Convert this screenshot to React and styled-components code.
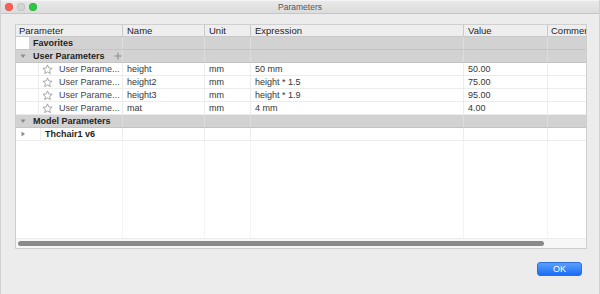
import React from 'react'
import styled, { createGlobalStyle } from 'styled-components'

const GlobalStyle = createGlobalStyle`
  html, body {
    margin: 0;
    padding: 0;
    background: #ececec;
  }
  body {
    font-family: "Liberation Sans", Arial, sans-serif;
  }
`

const COLS = '107px 82px 46px 213px 84px 38px'

const Window = styled.div`
  width: 600px;
  height: 294px;
  box-sizing: border-box;
  display: flex;
  flex-direction: column;
  background: #ececec;
  border-left: 1px solid #d0d0d0;
  border-right: 1px solid #d0d0d0;
  overflow: hidden;
`

const TitleBar = styled.div`
  height: 14px;
  flex-shrink: 0;
  position: relative;
  display: flex;
  align-items: center;
  justify-content: center;
  background: linear-gradient(#e8e8e8, #dcdcdc);
  border-top: 1px solid #f4f4f4;
  border-bottom: 1px solid #c6c6c6;
  box-sizing: border-box;
`

const Title = styled.span`
  font-size: 8.5px;
  color: #555;
`

const Lights = styled.div`
  position: absolute;
  left: 4px;
  top: 2px;
  display: flex;
  gap: 4px;
`

const Light = styled.span`
  width: 8px;
  height: 8px;
  border-radius: 50%;
  background: ${({ color }) => color};
  box-shadow: inset 0 0 0 0.5px rgba(0, 0, 0, 0.15);
`

const Body = styled.div`
  flex: 1;
  display: flex;
  flex-direction: column;
  padding: 10px 12px 0 14px;
`

const Panel = styled.div`
  width: 572px;
  height: 225px;
  box-sizing: border-box;
  border: 1px solid #cfcfcf;
  background: #fff;
  display: flex;
  flex-direction: column;
`

const Row = styled.div`
  display: grid;
  grid-template-columns: ${COLS};
  height: ${({ h }) => h || 13}px;
  box-sizing: border-box;
  background: ${({ kind }) =>
    kind === 'header' ? '#eeeeee' : kind === 'group' ? '#d2d2d2' : '#fff'};
  border-bottom: 1px solid
    ${({ kind }) => (kind === 'header' ? '#c9c9c9' : kind === 'group' ? '#c4c4c4' : '#ececec')};
  font-size: ${({ kind }) => (kind === 'header' ? '9.5px' : '9px')};
  color: ${({ kind }) => (kind === 'data' ? '#363636' : '#1e1e1e')};
  font-weight: ${({ kind }) => (kind === 'group' || kind === 'model' ? 'bold' : 'normal')};
`

const Cell = styled.div`
  display: flex;
  align-items: center;
  padding-left: ${({ pad }) => (pad === undefined ? 4 : pad)}px;
  border-right: 1px solid
    ${({ kind }) =>
      kind === 'header' ? '#c9c9c9' : kind === 'group' ? '#dedede' : '#ececec'};
  white-space: nowrap;
  overflow: hidden;
  &:last-child {
    border-right: none;
  }
`

const TreeCell = styled.div`
  display: flex;
  align-items: center;
  white-space: nowrap;
  overflow: hidden;
  border-right: 1px solid ${({ kind }) => (kind === 'group' ? '#dedede' : '#ececec')};
`

const Gutter = styled.div`
  width: ${({ w }) => w}px;
  height: 100%;
  flex-shrink: 0;
  display: flex;
  align-items: center;
  justify-content: ${({ start }) => (start ? 'flex-start' : 'center')};
  padding-left: ${({ start }) => (start ? 4 : 0)}px;
  background: ${({ white }) => (white ? '#fff' : 'transparent')};
  border-right: ${({ line }) => (line ? '1px solid #ececec' : 'none')};
  box-sizing: border-box;
`

const Label = styled.span`
  padding-left: ${({ pad }) => pad || 0}px;
  color: ${({ muted }) => (muted ? '#444' : 'inherit')};
`

const PlusIcon = styled.svg`
  margin-left: 9px;
`

const Fill = styled.div`
  flex: 1;
  display: grid;
  grid-template-columns: ${COLS};
`

const EmptyCol = styled.div`
  border-right: 1px solid #f3f3f3;
  &:last-child {
    border-right: none;
  }
`

const ScrollTrack = styled.div`
  height: 9px;
  flex-shrink: 0;
  background: #f7f7f7;
  border-top: 1px solid #ededed;
  display: flex;
  align-items: center;
  padding-left: 2px;
`

const ScrollThumb = styled.div`
  width: 526px;
  height: 5px;
  border-radius: 3px;
  background: #8a8a8a;
`

const Footer = styled.div`
  display: flex;
  justify-content: flex-end;
  padding: 13px 5px 0 0;
`

const OkButton = styled.button`
  width: 45px;
  height: 14px;
  border: 1px solid #2c6fe0;
  border-radius: 3px;
  background: linear-gradient(#5aa0fb, #1b6cf6);
  color: #fff;
  font-family: "Liberation Sans", Arial, sans-serif;
  font-size: 9px;
  padding: 0;
  line-height: 12px;
`

const Triangle = ({ open }) => (
  <svg width="6" height="6" viewBox="0 0 6 6">
    {open ? (
      <polygon points="0.5,1.5 5.5,1.5 3,5" fill="#8c8c8c" />
    ) : (
      <polygon points="1.5,0.5 5,3 1.5,5.5" fill="#8c8c8c" />
    )}
  </svg>
)

const Star = () => (
  <svg width="11" height="11" viewBox="0 0 24 24">
    <polygon
      points="12,2 14.9,8.6 22,9.3 16.6,14 18.2,21 12,17.3 5.8,21 7.4,14 2,9.3 9.1,8.6"
      fill="none"
      stroke="#8a8a8a"
      strokeWidth="1.6"
      strokeLinejoin="round"
    />
  </svg>
)

const params = [
  { name: 'height', unit: 'mm', expr: '50 mm', value: '50.00' },
  { name: 'height2', unit: 'mm', expr: 'height * 1.5', value: '75.00' },
  { name: 'height3', unit: 'mm', expr: 'height * 1.9', value: '95.00' },
  { name: 'mat', unit: 'mm', expr: '4 mm', value: '4.00' },
]

const EmptyCells = ({ kind }) => (
  <>
    {[0, 1, 2, 3, 4].map((i) => (
      <Cell key={i} kind={kind} />
    ))}
  </>
)

export default function App() {
  return (
    <Window>
      <GlobalStyle />
      <TitleBar>
        <Lights>
          <Light color="#fc5f57" />
          <Light color="#d3d3d3" />
          <Light color="#2bc840" />
        </Lights>
        <Title>Parameters</Title>
      </TitleBar>
      <Body>
        <Panel>
          <Row kind="header" h={12}>
            <Cell kind="header" pad={3}>Parameter</Cell>
            <Cell kind="header">Name</Cell>
            <Cell kind="header">Unit</Cell>
            <Cell kind="header">Expression</Cell>
            <Cell kind="header">Value</Cell>
            <Cell kind="header" pad={3}>Commen</Cell>
          </Row>

          <Row kind="group">
            <TreeCell kind="group">
              <Gutter w={13} white />
              <Label pad={4}>Favorites</Label>
            </TreeCell>
            <EmptyCells kind="group" />
          </Row>

          <Row kind="group">
            <TreeCell kind="group">
              <Gutter w={13}>
                <Triangle open />
              </Gutter>
              <Label pad={4}>User Parameters</Label>
              <PlusIcon width="8" height="8" viewBox="0 0 8 8">
                <path d="M4 0.5V7.5M0.5 4H7.5" stroke="#8a8a8a" strokeWidth="1" />
              </PlusIcon>
            </TreeCell>
            <EmptyCells kind="group" />
          </Row>

          {params.map((p) => (
            <Row kind="data" key={p.name}>
              <TreeCell>
                <Gutter w={23} line />
                <Gutter w={16}>
                  <Star />
                </Gutter>
                <Label pad={4} muted>User Parame...</Label>
              </TreeCell>
              <Cell>{p.name}</Cell>
              <Cell>{p.unit}</Cell>
              <Cell>{p.expr}</Cell>
              <Cell>{p.value}</Cell>
              <Cell />
            </Row>
          ))}

          <Row kind="group">
            <TreeCell kind="group">
              <Gutter w={13}>
                <Triangle open />
              </Gutter>
              <Label pad={4}>Model Parameters</Label>
            </TreeCell>
            <EmptyCells kind="group" />
          </Row>

          <Row kind="model">
            <TreeCell>
              <Gutter w={25} line start>
                <Triangle />
              </Gutter>
              <Label pad={4}>Thchair1 v6</Label>
            </TreeCell>
            <EmptyCells kind="data" />
          </Row>

          <Fill>
            {[0, 1, 2, 3, 4, 5].map((i) => (
              <EmptyCol key={i} />
            ))}
          </Fill>

          <ScrollTrack>
            <ScrollThumb />
          </ScrollTrack>
        </Panel>
        <Footer>
          <OkButton>OK</OkButton>
        </Footer>
      </Body>
    </Window>
  )
}
